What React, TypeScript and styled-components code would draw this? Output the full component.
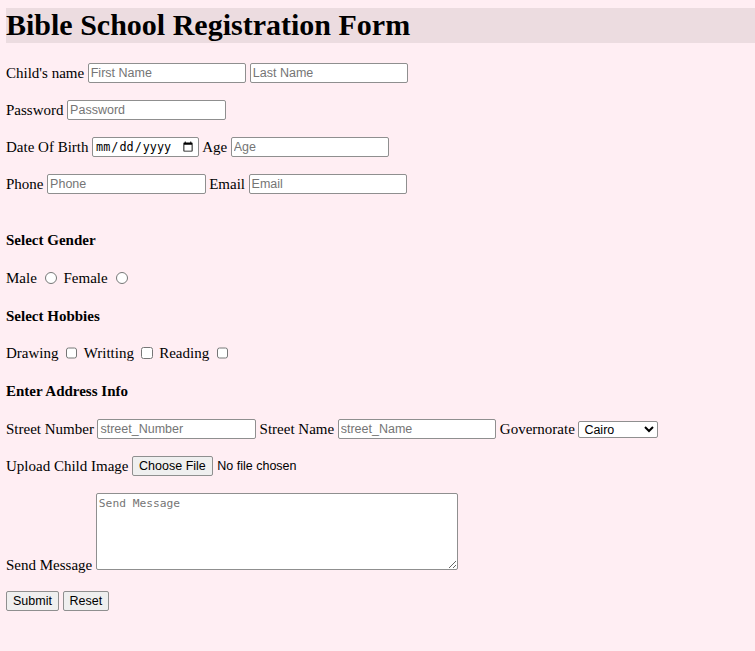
import React from "react";
import styled, { createGlobalStyle } from "styled-components";

const GlobalStyle = createGlobalStyle`
  html, body {
    margin: 0;
    padding: 0;
    background: #ffeef3;
  }
  body {
    font-family: "Liberation Serif", "Times New Roman", serif;
    font-size: 15px;
    color: #000;
  }
`;

const Page = styled.div`
  box-sizing: border-box;
  min-height: 651px;
  padding: 8px 0 30px 6px;
`;

const Title = styled.h1`
  margin: 0;
  background: #ecdce0;
  font-size: 30px;
  line-height: 34.5px;
  font-weight: bold;
`;

const Form = styled.form`
  display: flex;
  flex-direction: column;
  align-items: flex-start;
`;

const Row = styled.div<{ $mt: number; $align?: string }>`
  display: flex;
  align-items: ${(p) => p.$align ?? "center"};
  gap: 3.6px;
  min-height: 22px;
  margin-top: ${(p) => p.$mt}px;
  white-space: nowrap;
`;

const Label = styled.label`
  font-size: 15px;
  line-height: 18px;
`;

const BottomLabel = styled.label`
  font-size: 15px;
  line-height: 15px;
  margin-bottom: -3px;
`;

const SectionTitle = styled.h4<{ $mt: number }>`
  margin: ${(p) => p.$mt}px 0 0;
  height: 22px;
  line-height: 22px;
  font-size: 15px;
  font-weight: bold;
`;

const controlFont = `12.5px "Liberation Sans", Arial, sans-serif`;

const TextInput = styled.input<{ $w?: number }>`
  box-sizing: border-box;
  width: ${(p) => p.$w ?? 158.5}px;
  height: 20px;
  margin: 0;
  padding: 1px 2px;
  border: 1px solid #8f8f8f;
  border-radius: 2px;
  background: #fff;
  font: ${controlFont};
  color: #000;
  &::placeholder {
    color: #757575;
  }
`;

const DateInput = styled.input`
  box-sizing: border-box;
  width: 106.5px;
  height: 20px;
  margin: 0;
  padding: 1px 2px;
  border: 1px solid #8f8f8f;
  border-radius: 2px;
  background: #fff;
  font: 11.8px "DejaVu Sans Mono", "Liberation Mono", monospace;
  color: #000;
`;

const Radio = styled.input`
  width: 12px;
  height: 12px;
  margin: 0 2.8px 0 4.7px;
`;

const Check = styled.input`
  width: 11.5px;
  height: 11.5px;
  margin: 0 2.8px 0 3.75px;
`;

const Select = styled.select`
  box-sizing: border-box;
  width: 80px;
  height: 17px;
  margin: 0;
  padding: 0 0 0 1px;
  border: 1px solid #8f8f8f;
  border-radius: 2px;
  background: #fff;
  font: ${controlFont};
  color: #000;
`;

const FileInput = styled.input`
  font: ${controlFont};
  color: #000;
  margin: 0;
  &::file-selector-button {
    box-sizing: border-box;
    height: 20px;
    margin: 0 4.5px 0 0;
    padding: 1px 6px;
    border: 1px solid #8f8f8f;
    border-radius: 2px;
    background: #efefef;
    font: ${controlFont};
    color: #000;
  }
`;

const MessageBox = styled.textarea`
  box-sizing: border-box;
  width: 362px;
  height: 77px;
  margin: 0;
  padding: 3px 2px 2px;
  border: 1px solid #8f8f8f;
  border-radius: 2px;
  background: #fff;
  font: 11.25px "DejaVu Sans Mono", "Liberation Mono", monospace;
  color: #000;
  &::placeholder {
    color: #757575;
  }
`;

const Button = styled.button`
  box-sizing: border-box;
  height: 20px;
  margin: 0;
  padding: 1px 6px;
  border: 1px solid #8f8f8f;
  border-radius: 2px;
  background: #efefef;
  font: ${controlFont};
  color: #000;
`;

export default function App() {
  return (
    <>
      <GlobalStyle />
      <Page>
        <Title>Bible School Registration Form</Title>
        <Form onSubmit={(e) => e.preventDefault()}>
          <Row $mt={19.5}>
            <Label>Child's name</Label>
            <TextInput type="text" placeholder="First Name" />
            <TextInput type="text" placeholder="Last Name" />
          </Row>
          <Row $mt={15}>
            <Label>Password</Label>
            <TextInput type="password" placeholder="Password" />
          </Row>
          <Row $mt={15}>
            <Label>Date Of Birth</Label>
            <DateInput type="date" />
            <Label>Age</Label>
            <TextInput type="text" placeholder="Age" />
          </Row>
          <Row $mt={15}>
            <Label>Phone</Label>
            <TextInput type="tel" placeholder="Phone" />
            <Label>Email</Label>
            <TextInput type="email" placeholder="Email" />
          </Row>

          <SectionTitle $mt={34}>Select Gender</SectionTitle>
          <Row $mt={16}>
            <Label>Male</Label>
            <Radio type="radio" name="gender" />
            <Label>Female</Label>
            <Radio type="radio" name="gender" />
          </Row>

          <SectionTitle $mt={16}>Select Hobbies</SectionTitle>
          <Row $mt={15}>
            <Label>Drawing</Label>
            <Check type="checkbox" />
            <Label>Writting</Label>
            <Check type="checkbox" />
            <Label>Reading</Label>
            <Check type="checkbox" />
          </Row>

          <SectionTitle $mt={16}>Enter Address Info</SectionTitle>
          <Row $mt={16}>
            <Label>Street Number</Label>
            <TextInput type="text" placeholder="street_Number" />
            <Label>Street Name</Label>
            <TextInput type="text" placeholder="street_Name" />
            <Label>Governorate</Label>
            <Select defaultValue="Cairo">
              <option>Cairo</option>
              <option>Giza</option>
              <option>Alexandria</option>
            </Select>
          </Row>
          <Row $mt={15}>
            <Label>Upload Child Image</Label>
            <FileInput type="file" />
          </Row>
          <Row $mt={16} $align="flex-end">
            <BottomLabel>Send Message</BottomLabel>
            <MessageBox placeholder="Send Message" />
          </Row>
          <Row $mt={20}>
            <Button type="submit">Submit</Button>
            <Button type="reset">Reset</Button>
          </Row>
        </Form>
      </Page>
    </>
  );
}
